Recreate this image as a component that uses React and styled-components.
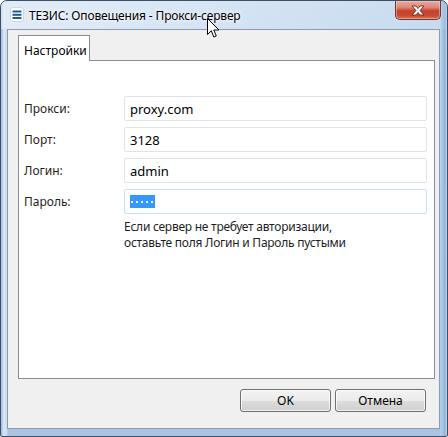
import React from 'react'
import styled, { createGlobalStyle } from 'styled-components'

const GlobalStyle = createGlobalStyle`
    html, body {
        margin: 0;
        padding: 0;
        background: #ffffff;
    }
    body {
        font-family: "Segoe UI", "Noto Sans", "Open Sans", sans-serif;
        font-size: 12px;
        color: #1e1e1e;
    }
`

const fields = [
    { label: 'Прокси:', value: 'proxy.com' },
    { label: 'Порт:', value: '3128' },
    { label: 'Логин:', value: 'admin' },
]

const App = () => {
    return (
        <>
            <GlobalStyle />
            <Window>
                <TitleBar>
                    <AppIcon>
                        <svg width="14" height="15" viewBox="0 0 14 15">
                            <rect x="0.5" y="0.5" width="13" height="14" rx="2.5" fill="#ffffff" stroke="#c9d7e6" />
                            <rect x="2.5" y="3.5" width="9" height="2" fill="#1c5b8e" />
                            <rect x="2.5" y="6.8" width="9" height="2" fill="#1c5b8e" />
                            <rect x="2.5" y="10" width="9" height="2" fill="#1c5b8e" />
                        </svg>
                    </AppIcon>
                    <Title>ТЕЗИС: Оповещения - Прокси-сервер</Title>
                    <CloseButton>
                        <svg width="16" height="11" viewBox="0 0 16 11">
                            <path d="M2 1 L6 1 L8 3.5 L10 1 L14 1 L10 5.5 L14 10 L10 10 L8 7.5 L6 10 L2 10 L6 5.5 Z"
                                fill="#ffffff" stroke="#6b2a22" strokeWidth="0.9" strokeLinejoin="round" />
                        </svg>
                    </CloseButton>
                </TitleBar>
                <Client>
                    <Tabs>
                        <Tab>Настройки</Tab>
                    </Tabs>
                    <Panel>
                        <Form>
                            {fields.map(f => (
                                <React.Fragment key={f.label}>
                                    <Label>{f.label}</Label>
                                    <Field>{f.value}</Field>
                                </React.Fragment>
                            ))}
                            <Label>Пароль:</Label>
                            <Field focused>
                                <Selection>
                                    {[0, 1, 2, 3, 4].map(i => <Dot key={i} />)}
                                </Selection>
                            </Field>
                            <Hint>
                                Если сервер не требует авторизации,<br />
                                оставьте поля Логин и Пароль пустыми
                            </Hint>
                        </Form>
                    </Panel>
                    <ButtonRow>
                        <Button>OK</Button>
                        <Button>Отмена</Button>
                    </ButtonRow>
                </Client>
                <Cursor>
                    <svg width="13" height="21" viewBox="0 0 13 21">
                        <path d="M0.5 0.5 L0.5 16.5 L4.3 12.8 L6.8 19 L9.3 18 L6.8 12 L12 12 Z"
                            fill="#ffffff" stroke="#000000" strokeWidth="1" strokeLinejoin="miter" />
                    </svg>
                </Cursor>
            </Window>
        </>
    )
}

const Window = styled.div`
    position: relative;
    box-sizing: border-box;
    width: 448px;
    height: 437px;
    display: flex;
    flex-direction: column;
    padding: 0 7px 7px 6px;
    border: 1px solid #3d4f66;
    border-radius: 7px 7px 2px 2px;
    background:
        linear-gradient(90deg, #9fbcdc 0px, #dbe8f5 3px, #c7dbef 6px, transparent 7px, transparent 439px, #b6cfe9 440px, #8fb2d8 444px, #c4d8ee 446px),
        linear-gradient(180deg, #d3e2f2 0%, #c6daef 20%, #b6cde6 60%, #a9c3e0 100%);
    overflow: hidden;
`

const TitleBar = styled.div`
    height: 28px;
    display: flex;
    align-items: center;
    margin: 0 -7px 0 -6px;
    padding-left: 9px;
    background: linear-gradient(90deg, rgba(236, 243, 251, 0.6) 0%, rgba(220, 233, 247, 0.45) 45%, rgba(185, 208, 234, 0.35) 100%);
`

const AppIcon = styled.div`
    width: 14px;
    height: 15px;
    display: flex;
    margin-top: -1px;
`

const Title = styled.div`
    margin-left: 5px;
    font-size: 12px;
    letter-spacing: -0.15px;
    color: #000000;
    text-shadow: 0 0 6px rgba(255, 255, 255, 0.95), 0 0 3px rgba(255, 255, 255, 0.9);
    white-space: nowrap;
`

const CloseButton = styled.div`
    align-self: flex-start;
    margin-left: auto;
    margin-right: 6px;
    width: 46px;
    height: 19px;
    box-sizing: border-box;
    border: 1px solid #6e3a34;
    border-top: none;
    border-radius: 0 0 5px 5px;
    background: linear-gradient(180deg, #e9a99c 0%, #dc8a78 35%, #c5412b 55%, #c74a33 80%, #d9734f 100%);
    box-shadow: inset 0 0 0 1px rgba(255, 220, 210, 0.45);
    display: flex;
    align-items: center;
    justify-content: center;
`

const Client = styled.div`
    flex: 1;
    box-sizing: border-box;
    display: flex;
    flex-direction: column;
    background: #f0f0f0;
    border: 1px solid #8c9bb0;
    padding: 5px 4px 16px 10px;
`

const Tabs = styled.div`
    display: flex;
`

const Tab = styled.div`
    position: relative;
    z-index: 1;
    box-sizing: border-box;
    width: 72px;
    height: 26px;
    margin-bottom: -1px;
    padding: 6px 0 0 5px;
    background: #ffffff;
    border: 1px solid #898c95;
    border-bottom: none;
    color: #000000;
`

const Panel = styled.div`
    flex: 1;
    background: #ffffff;
    border: 1px solid #898c95;
    padding: 35px 7px 0 5px;
`

const Form = styled.div`
    display: grid;
    grid-template-columns: 100px 1fr;
    row-gap: 6px;
    align-items: center;
`

const Label = styled.div`
    color: #1e1e1e;
`

const Field = styled.div`
    box-sizing: border-box;
    height: 25px;
    display: flex;
    align-items: center;
    padding-left: 5px;
    border: 1px solid ${p => (p.focused ? '#c6e3f0' : '#e0e2e7')};
    border-radius: 2px;
    background: #ffffff;
    font-size: 13px;
    color: #000000;
`

const Selection = styled.span`
    display: inline-flex;
    align-items: center;
    gap: 3px;
    height: 13px;
    padding: 0 2px 0 1px;
    background: #3399ff;
`

const Dot = styled.span`
    width: 2px;
    height: 2px;
    background: #ffffff;
`

const Hint = styled.div`
    grid-column: 2;
    margin-top: -1px;
    line-height: 16px;
    letter-spacing: -0.25px;
    color: #1e1e1e;
`

const ButtonRow = styled.div`
    display: flex;
    justify-content: flex-end;
    gap: 4px;
    margin-top: 10px;
    padding-right: 9px;
`

const Button = styled.div`
    box-sizing: border-box;
    width: 91px;
    height: 23px;
    display: flex;
    align-items: center;
    justify-content: center;
    border: 1px solid #707070;
    border-radius: 3px;
    background: linear-gradient(180deg, #f2f2f2 0%, #ebebeb 50%, #dddddd 51%, #cfcfcf 100%);
    box-shadow: inset 0 0 0 1px rgba(255, 255, 255, 0.7);
    color: #000000;
`

const Cursor = styled.div`
    position: absolute;
    left: 206px;
    top: 17px;
    width: 13px;
    height: 21px;
    pointer-events: none;
`

export default App
